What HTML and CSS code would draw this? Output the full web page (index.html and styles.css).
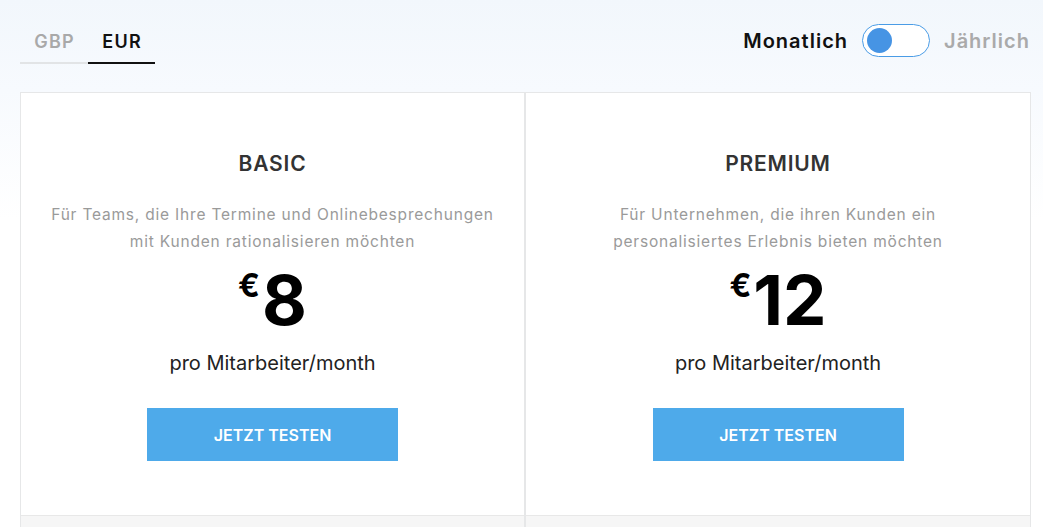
FILE: index.html
```html
<!DOCTYPE html>
<html lang="de">
<head>
<meta charset="utf-8">
<title>Preise</title>
<link rel="stylesheet" href="styles.css">
</head>
<body>
<div class="page">
  <div class="topbar">
    <div class="tabs">
      <div class="tab">GBP</div>
      <div class="tab active">EUR</div>
    </div>
    <div class="billing">
      <span class="bill-label on">Monatlich</span>
      <span class="switch"><span class="knob"></span></span>
      <span class="bill-label off">Jährlich</span>
    </div>
  </div>
  <div class="plans">
    <div class="plan">
      <div class="plan-body">
        <div class="plan-name">BASIC</div>
        <div class="plan-desc">Für Teams, die Ihre Termine und Onlinebesprechungen<br>mit Kunden rationalisieren möchten</div>
        <div class="price"><span class="cur">€</span><span class="amount">8</span></div>
        <div class="per">pro Mitarbeiter/month</div>
        <a class="cta" href="#">JETZT TESTEN</a>
      </div>
      <div class="plan-foot"></div>
    </div>
    <div class="plan">
      <div class="plan-body">
        <div class="plan-name">PREMIUM</div>
        <div class="plan-desc">Für Unternehmen, die ihren Kunden ein<br>personalisiertes Erlebnis bieten möchten</div>
        <div class="price"><span class="cur">€</span><span class="amount">12</span></div>
        <div class="per">pro Mitarbeiter/month</div>
        <a class="cta" href="#">JETZT TESTEN</a>
      </div>
      <div class="plan-foot"></div>
    </div>
  </div>
</div>
</body>
</html>
```
FILE: styles.css
```css
* { box-sizing: border-box; }
html, body { margin: 0; padding: 0; }
body {
  font-family: Inter, "Open Sans", "Liberation Sans", sans-serif;
  background: linear-gradient(180deg, #f2f7fc 0, #f7fafe 90px, #ffffff 220px);
  height: 527px;
  overflow: hidden;
}
.page { padding: 0 12px 0 20px; }
.topbar {
  height: 92px;
  display: flex;
  justify-content: space-between;
  align-items: flex-start;
}
.tabs { display: flex; margin-top: 30px; }
.tab {
  width: 68px;
  text-align: center;
  font-size: 18px;
  font-weight: 600;
  letter-spacing: 1.2px;
  text-indent: 1.2px;
  line-height: 24px;
  padding-bottom: 8px;
  color: #a9a9a9;
  border-bottom: 2px solid #e2e4e6;
}
.tab.active { color: #111; border-bottom-color: #111; width: 67px; }
.billing {
  display: flex;
  align-items: center;
  margin-top: 24px;
  margin-right: 1px;
}
.bill-label {
  font-size: 20px;
  font-weight: 600;
  line-height: 32px;
  letter-spacing: 1px;
}
.bill-label.on { color: #111; margin-right: 14px; }
.bill-label.off { color: #aaaaaa; margin-left: 14px; }
.switch {
  width: 68px;
  height: 33px;
  border: 1.5px solid #4a9ce6;
  border-radius: 17px;
  background: #fff;
  display: flex;
  align-items: center;
  padding-left: 4px;
}
.knob {
  width: 25px;
  height: 25px;
  border-radius: 50%;
  background: #4694e4;
}
.plans {
  display: grid;
  grid-template-columns: 505px 506px;
}
.plan {
  border: 1px solid #e6e7e8;
  border-bottom: none;
  background: #fff;
  display: flex;
  flex-direction: column;
}
.plan-body {
  height: 422px;
  display: flex;
  flex-direction: column;
  align-items: center;
  text-align: center;
}
.plan-name {
  margin-top: 58px;
  font-size: 21px;
  line-height: 26px;
  font-weight: 600;
  letter-spacing: 0.8px;
  color: #333;
}
.plan-desc {
  margin-top: 24px;
  font-size: 15.5px;
  line-height: 27px;
  letter-spacing: 0.8px;
  color: #9a9a9a;
}
.price {
  margin-top: 10px;
  height: 70px;
  line-height: 70px;
  color: #000;
  font-weight: 700;
  white-space: nowrap;
}
.cur {
  display: inline-block;
  vertical-align: top;
  font-size: 32px;
  line-height: 30px;
  padding-top: 6px;
  margin-right: 2px;
}
.amount { font-size: 69px; }
.per {
  margin-top: 16px;
  font-size: 20px;
  line-height: 25px;
  color: #222;
}
.cta {
  margin-top: 32px;
  width: 251px;
  height: 53px;
  background: #4eaaea;
  color: #fff;
  text-decoration: none;
  font-size: 16px;
  font-weight: 600;
  display: flex;
  align-items: center;
  justify-content: center;
}
.plan-foot {
  height: 12px;
  border-top: 1px solid #e8e8e8;
  background: #f6f6f6;
}
```
